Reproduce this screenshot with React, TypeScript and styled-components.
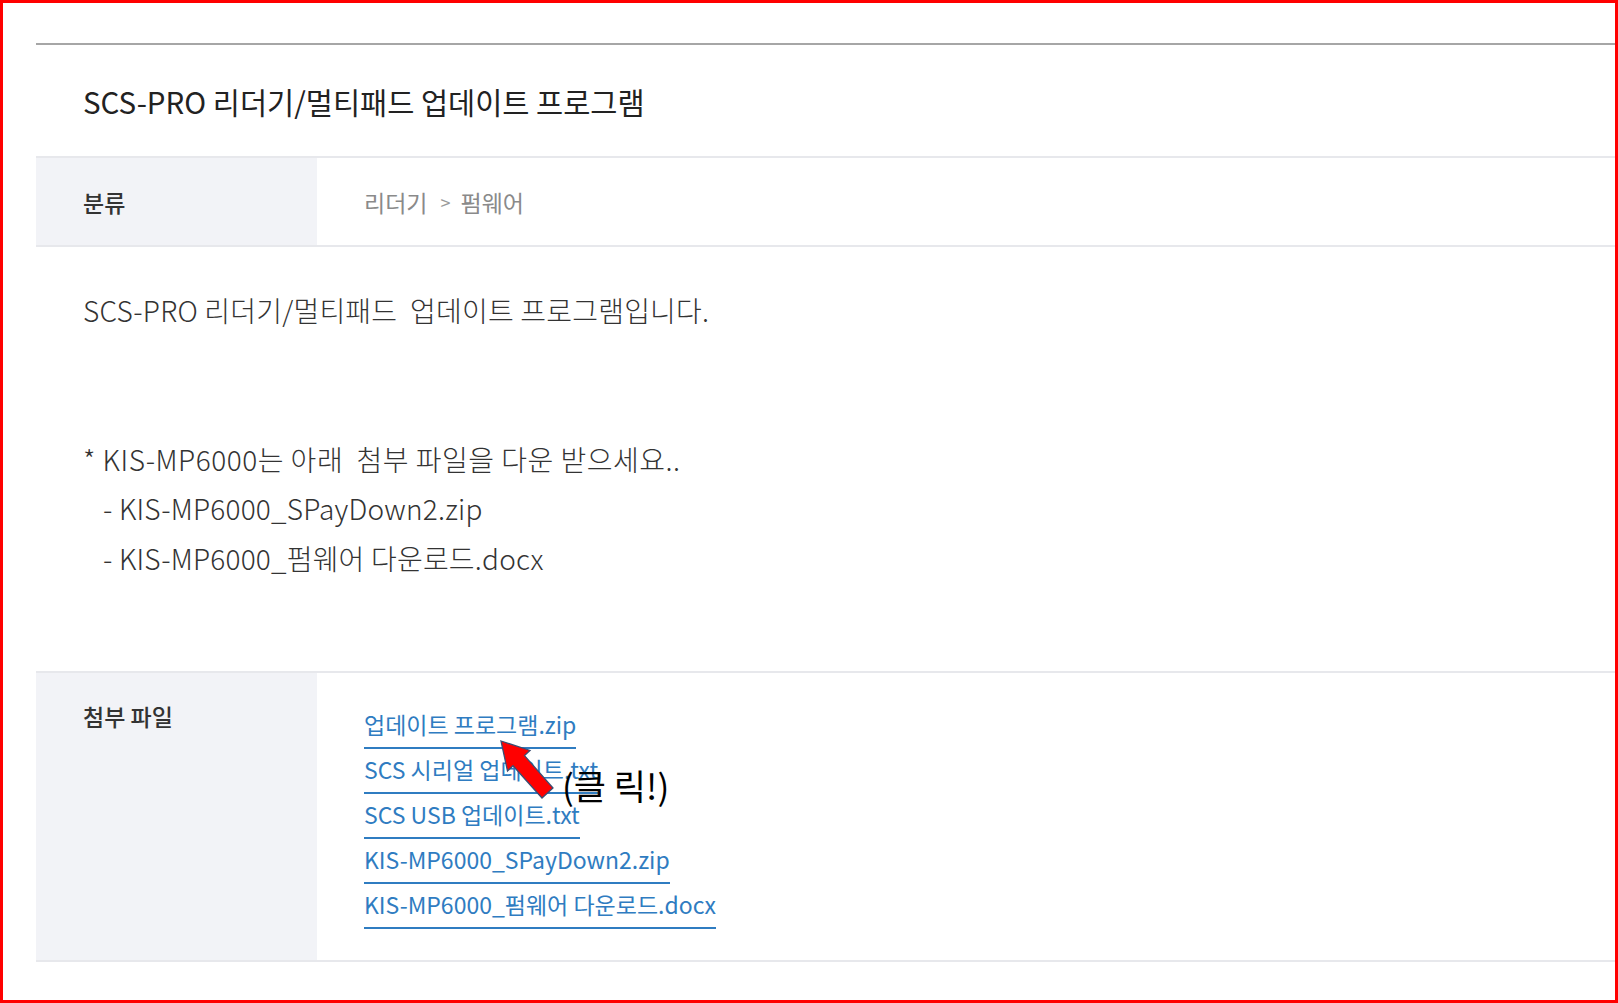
import React from 'react';
import styled, { createGlobalStyle } from 'styled-components';

const GlobalStyle = createGlobalStyle`
  html, body {
    margin: 0;
    padding: 0;
    background: #ffffff;
  }
  body {
    font-family: "Noto Sans CJK KR", "Noto Sans", sans-serif;
  }
`;

const Frame = styled.div`
  box-sizing: border-box;
  width: 1618px;
  height: 1003px;
  border: 3px solid #ff0000;
  padding: 40px 0 0 33px;
  overflow: hidden;
`;

const Board = styled.div`
  border-top: 2px solid #a6a6a6;
`;

const Title = styled.h2`
  margin: 0;
  height: 111px;
  display: flex;
  align-items: center;
  padding-left: 47px;
  font-size: 29.5px;
  font-weight: 400;
  color: #222222;
`;

const Row = styled.div<{ $last?: boolean }>`
  display: flex;
  border-top: 2px solid #e7e8ec;
  border-bottom: ${(p) => (p.$last ? '2px solid #e7e8ec' : 'none')};
`;

const Label = styled.div<{ $top?: number }>`
  width: 281px;
  flex-shrink: 0;
  box-sizing: border-box;
  background: #f2f3f7;
  padding: ${(p) => (p.$top ? `${p.$top}px` : '0')} 0 0 47px;
  display: flex;
  align-items: ${(p) => (p.$top ? 'flex-start' : 'center')};
  font-size: 23px;
  font-weight: 500;
  line-height: 30px;
  color: #333333;
`;

const Value = styled.div`
  flex: 1;
  display: flex;
  align-items: center;
  padding-left: 47px;
  height: 87px;
  font-size: 23px;
  color: #8a8a8a;
`;

const Crumb = styled.span`
  margin: 0 10px 0 13px;
  font-size: 18px;
  color: #9a9a9a;
`;

const Content = styled.div`
  padding: 39px 0 87px 47px;
  font-size: 28px;
  font-weight: 300;
  line-height: 49.6px;
  letter-spacing: 0.2px;
  color: #333333;
`;

const Line = styled.p<{ $indent?: boolean; $wide?: boolean }>`
  margin: 0;
  min-height: 49.6px;
  padding-left: ${(p) => (p.$indent ? '20px' : '0')};
  letter-spacing: ${(p) => (p.$wide ? '0.5px' : 'inherit')};
  white-space: pre;
`;

const Files = styled.div`
  position: relative;
  flex: 1;
  display: flex;
  flex-direction: column;
  align-items: flex-start;
  gap: 5px;
  padding: 36px 0 31px 47px;
`;

const FileLink = styled.a`
  display: inline-block;
  font-size: 23px;
  line-height: 30px;
  padding-bottom: 8px;
  color: #2f7cc1;
  text-decoration: none;
  border-bottom: 2px solid #2f7cc1;
`;

const Pointer = styled.svg`
  position: absolute;
  left: 180px;
  top: 64px;
  width: 62px;
  height: 64px;
  overflow: visible;
`;

const Callout = styled.span`
  position: absolute;
  left: 245px;
  top: 93px;
  font-size: 35px;
  line-height: 38px;
  color: #000000;
  white-space: pre;
`;

const files = [
  '업데이트 프로그램.zip',
  'SCS 시리얼 업데이트.txt',
  'SCS USB 업데이트.txt',
  'KIS-MP6000_SPayDown2.zip',
  'KIS-MP6000_펌웨어 다운로드.docx',
];

export default function App() {
  return (
    <>
      <GlobalStyle />
      <Frame>
        <Board>
          <Title>SCS-PRO 리더기/멀티패드 업데이트 프로그램</Title>
          <Row $last>
            <Label>분류</Label>
            <Value>
              리더기<Crumb>&gt;</Crumb>펌웨어
            </Value>
          </Row>
          <Content>
            <Line>SCS-PRO 리더기/멀티패드  업데이트 프로그램입니다.</Line>
            <Line />
            <Line />
            <Line $wide>* KIS-MP6000는 아래  첨부 파일을 다운 받으세요..</Line>
            <Line $indent>- KIS-MP6000_SPayDown2.zip</Line>
            <Line $indent>- KIS-MP6000_펌웨어 다운로드.docx</Line>
          </Content>
          <Row $last>
            <Label $top={28}>첨부 파일</Label>
            <Files>
              {files.map((f) => (
                <FileLink key={f} href="#">
                  {f}
                </FileLink>
              ))}
              <Pointer viewBox="0 0 62 64">
                <polygon
                  points="4,4 33,13.5 27.5,18.6 56,51 45,61 16,28.7 10.5,34"
                  fill="#ff0000"
                  stroke="#3b4d72"
                  strokeWidth="1.3"
                  strokeLinejoin="miter"
                />
              </Pointer>
              <Callout>(클 릭!)</Callout>
            </Files>
          </Row>
        </Board>
      </Frame>
    </>
  );
}
